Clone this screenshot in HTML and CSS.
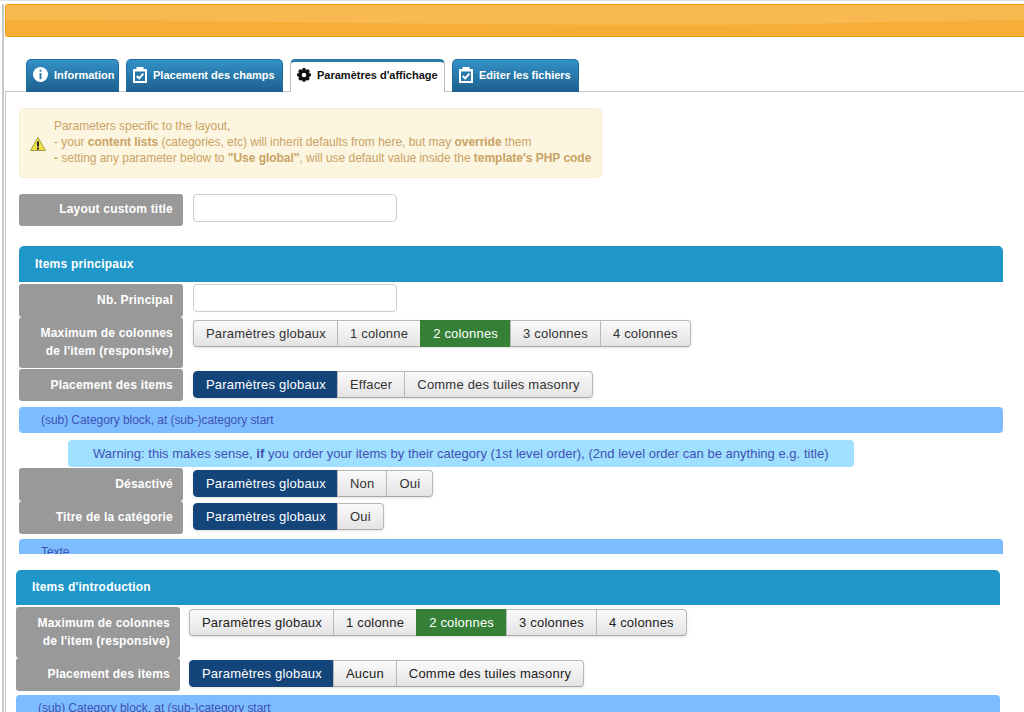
FILE: index.html
```html
<!DOCTYPE html>
<html lang="en">
<head>
<meta charset="UTF-8">
<title>Paramètres d'affichage</title>
<link rel="stylesheet" href="styles.css">
</head>
<body>
<div class="toolbar">
    <svg class="toolbar-shine" viewBox="0 0 1019 31" preserveAspectRatio="none"><path d="M0 0H1019V15C940 16 880 17 800 19C650 21 500 19 340 18C200 16 100 15 0 15Z" fill="#f8b950"/></svg>
</div>

<ul class="tabs">
    <li class="tab">
        <svg class="tab-icon info-icon" viewBox="0 0 16 16"><circle cx="8" cy="8" r="8" fill="#fff"/><rect x="7" y="3" width="2" height="2" fill="#2a78a8"/><rect x="7" y="6.500" width="2" height="6.500" fill="#2a78a8"/></svg>
        Information
    </li>
    <li class="tab">
        <svg class="tab-icon" viewBox="0 0 14 16"><path d="M0 2h3.500v-2h7v2h3.500v14h-14z" fill="#fff"/><rect x="2" y="4.500" width="10" height="9.500" fill="#2a78a8"/><path d="M3.800 9l2.400 2.400 4.200-4.700" fill="none" stroke="#fff" stroke-width="2"/></svg>
        Placement des champs
    </li>
    <li class="tab active">
        <svg class="tab-icon" viewBox="-2 0 20 20"><path d="M6 0h4l.4 2.100 1.300.6 1.800-1.200 2.900 2.900-1.200 1.800.6 1.300 2.100.4v4l-2.100.4-.6 1.300 1.200 1.800-2.900 2.900-1.800-1.200-1.300.6-.4 2.100h-4l-.4-2.100-1.300-.6-1.800 1.200-2.900-2.900 1.200-1.800-.6-1.300-2.100-.4v-4l2.100-.4.6-1.300-1.200-1.800 2.900-2.900 1.800 1.200 1.300-.6z" fill="#111"/><circle cx="8" cy="9.900" r="3.200" fill="#fff"/></svg>
        Paramètres d'affichage
    </li>
    <li class="tab">
        <svg class="tab-icon" viewBox="0 0 14 16"><path d="M0 2h3.500v-2h7v2h3.500v14h-14z" fill="#fff"/><rect x="2" y="4.500" width="10" height="9.500" fill="#2a78a8"/><path d="M3.800 9l2.400 2.400 4.200-4.700" fill="none" stroke="#fff" stroke-width="2"/></svg>
        Editer les fichiers
    </li>
</ul>

<div class="panel">
    <div class="block">
        <div class="alert">
            <svg class="alert-icon" viewBox="0 0 16 14"><path d="M8 .5l7.500 13h-15z" fill="#f1e04a" stroke="#a39a3a"/><rect x="7" y="4.500" width="2" height="5" fill="#222"/><rect x="7" y="10.500" width="2" height="2" fill="#222"/></svg>
            <p>Parameters specific to the layout,<br>
            - your <b>content lists</b> (categories, etc) will inherit defaults from here, but may <b>override</b> them<br>
            <b>-</b> setting any parameter below to <b>"Use global"</b>, will use default value inside the <b>template's PHP code</b></p>
        </div>

        <div class="row row-title">
            <label class="label">Layout custom title</label>
            <input class="field" type="text">
        </div>

        <h3 class="section">Items principaux</h3>
        <div class="row row-33">
            <label class="label">Nb. Principal</label>
            <input class="field" type="text">
        </div>
        <div class="row row-51">
            <label class="label">Maximum de colonnes<br>de l'item (responsive)</label>
            <div class="btns">
                <span class="btn">Paramètres globaux</span>
                <span class="btn">1 colonne</span>
                <span class="btn green">2 colonnes</span>
                <span class="btn">3 colonnes</span>
                <span class="btn">4 colonnes</span>
            </div>
        </div>
        <div class="row row-32">
            <label class="label">Placement des items</label>
            <div class="btns">
                <span class="btn navy">Paramètres globaux</span>
                <span class="btn">Effacer</span>
                <span class="btn">Comme des tuiles masonry</span>
            </div>
        </div>
        <div class="sub">(sub) Category block, at (sub-)category start</div>
        <div class="warn">Warning: this makes sense, <b>if</b> you order your items by their category (1st level order), (2nd level order can be anything e.g. title)</div>
        <div class="row row-33">
            <label class="label">Désactivé</label>
            <div class="btns">
                <span class="btn navy">Paramètres globaux</span>
                <span class="btn">Non</span>
                <span class="btn">Oui</span>
            </div>
        </div>
        <div class="row row-33">
            <label class="label">Titre de la catégorie</label>
            <div class="btns">
                <span class="btn navy">Paramètres globaux</span>
                <span class="btn">Oui</span>
            </div>
        </div>
        <div class="sub sub-next">Texte</div>
    </div>

    <div class="block block-two">
        <h3 class="section section-two">Items d'introduction</h3>
        <div class="row row-51">
            <label class="label">Maximum de colonnes<br>de l'item (responsive)</label>
            <div class="btns">
                <span class="btn">Paramètres globaux</span>
                <span class="btn">1 colonne</span>
                <span class="btn green">2 colonnes</span>
                <span class="btn">3 colonnes</span>
                <span class="btn">4 colonnes</span>
            </div>
        </div>
        <div class="row row-33">
            <label class="label">Placement des items</label>
            <div class="btns">
                <span class="btn navy">Paramètres globaux</span>
                <span class="btn">Aucun</span>
                <span class="btn">Comme des tuiles masonry</span>
            </div>
        </div>
        <div class="sub">(sub) Category block, at (sub-)category start</div>
    </div>
</div>
</body>
</html>
```

FILE: styles.css
```css
html, body {
    height: 712px;
    overflow: hidden;
}
body {
    margin: 0;
    padding: 4px 0 0 5px;
    box-sizing: border-box;
    background: #fff;
    border-top: 1px solid #e4e4e4;
    font-family: "Liberation Sans", Arial, sans-serif;
    font-size: 12px;
    position: relative;
}
body::before {
    content: "";
    position: absolute;
    left: 2px;
    top: 3px;
    bottom: 0;
    width: 2px;
    background: #c8c8c8;
}
.toolbar {
    height: 31px;
    margin-top: -1px;
    border: 1px solid #f09a0c;
    border-right: 0;
    border-radius: 3px 0 0 3px;
    background: #f7ae38;
}
.toolbar-shine {
    display: block;
    width: 100%;
    height: 100%;
}
.tabs {
    display: flex;
    gap: 7px;
    list-style: none;
    margin: 22px 0 -1px;
    padding: 0 0 0 21px;
    position: relative;
}
.tab {
    display: flex;
    align-items: center;
    gap: 6px;
    height: 33px;
    box-sizing: border-box;
    padding: 0 0 3px 6px;
    border: 1px solid #1f6d9f;
    border-bottom: 0;
    border-radius: 5px 5px 0 0;
    background: linear-gradient(#3391c7, #1d5f8d);
    color: #fff;
    font-size: 11px;
    font-weight: bold;
    white-space: nowrap;
}
.tab-icon {
    width: 14px;
    height: 16px;
    flex: none;
}
.info-icon {
    width: 15px;
    height: 15px;
}
.tab:nth-child(1) {
    width: 93px;
}
.tab:nth-child(2) {
    width: 157px;
}
.tab:nth-child(3) {
    width: 155px;
}
.tab:nth-child(4) {
    width: 127px;
}
.tab.active {
    background: #fff;
    color: #111;
    border: 1px solid #bbb;
    border-top: 3px solid #2a78a8;
    border-bottom: 0;
    padding-bottom: 4px;
}
.panel {
    border-top: 1px solid #c8c8c8;
    border-left: 1px solid #c8c8c8;
}
.block {
    height: 462px;
    overflow: hidden;
    padding: 16px 21px 0 13px;
    box-sizing: border-box;
}
.block-two {
    height: 160px;
    margin-top: 16px;
    padding: 0 24px 0 10px;
}
.alert {
    display: flex;
    align-items: center;
    gap: 8px;
    height: 70px;
    width: 583px;
    box-sizing: border-box;
    padding: 0 0 3px 10px;
    margin-bottom: 16px;
    background: #fcf5e0;
    border: 1px solid #faeed2;
    border-radius: 5px;
    color: #c9a365;
}
.alert p {
    margin: 0;
    line-height: 16px;
    letter-spacing: -.03px;
    white-space: nowrap;
}
.alert-icon {
    width: 16px;
    height: 14px;
    flex: none;
    margin-top: 5px;
}
.row {
    display: flex;
    align-items: flex-start;
    gap: 10px;
}
.row-title {
    height: 32px;
    margin-bottom: 20px;
}
.row-33 {
    height: 33px;
}
.row-32 {
    height: 32px;
    margin-top: 1px;
}
.row-51 {
    height: 51px;
}
.label {
    align-self: stretch;
    width: 164px;
    flex: none;
    box-sizing: border-box;
    padding: 0 10px 2px;
    display: flex;
    align-items: center;
    justify-content: flex-end;
    text-align: right;
    line-height: 18px;
    background: #999;
    border-radius: 3px;
    color: #fff;
    font-size: 12px;
    font-weight: bold;
    letter-spacing: .2px;
    white-space: nowrap;
}
.row-32 .label {
    padding-bottom: 0;
}
.row-51 .label {
    display: block;
    padding-top: 7px;
}
.field {
    width: 204px;
    height: 28px;
    box-sizing: border-box;
    margin: 0;
    border: 1px solid #ccc;
    border-radius: 4px;
    background: #fff;
}
.section {
    margin: 0 0 2px;
    height: 36px;
    padding-left: 16px;
    line-height: 36px;
    background: #2097c9;
    border-radius: 5px 5px 0 0;
    color: #fff;
    font-size: 12px;
    font-weight: bold;
    letter-spacing: .2px;
}
.section-two {
    height: 35px;
    line-height: 35px;
}
.btns {
    display: flex;
    margin-top: 2px;
    height: 27px;
    border-radius: 4px;
    box-shadow: 0 1px 3px rgba(0, 0, 0, .12);
}
.row-51 .btns {
    margin-top: 3px;
}
.block-two .btns {
    margin: 2px 0 0 -1px;
}
.btn {
    display: flex;
    align-items: center;
    box-sizing: border-box;
    padding: 0 12px 1px;
    margin-left: -1px;
    border: 1px solid #b8b8b8;
    border-bottom-color: #a8a8a8;
    background: linear-gradient(#fafafa, #e4e4e4);
    color: #333;
    font-size: 13px;
    letter-spacing: .2px;
    white-space: nowrap;
}
.block-two .btn {
    color: #222;
}
.btn:first-child {
    margin-left: 0;
    padding-right: 11px;
    border-radius: 4px 0 0 4px;
}
.btn:last-child {
    border-radius: 0 4px 4px 0;
}
.btn.navy {
    background: #14457a;
    border-color: #14457a;
    color: #fff;
}
.btn.green {
    background: #357f36;
    border-color: #357f36;
    color: #fff;
}
.sub {
    margin-top: 4px;
    height: 26px;
    padding-left: 22px;
    line-height: 26px;
    background: #7dbdff;
    border-radius: 4px;
    color: #3f51b5;
    font-size: 12px;
    letter-spacing: -.05px;
}
.row-32 + .sub {
    margin-top: 6px;
}
.sub-next {
    margin-top: 5px;
}
.warn {
    margin: 7px 149px 1px 49px;
    height: 27px;
    padding-left: 25px;
    line-height: 27px;
    background: #9fdfff;
    border-radius: 4px;
    color: #3f51b5;
    font-size: 13px;
    letter-spacing: .02px;
    white-space: nowrap;
}
```
